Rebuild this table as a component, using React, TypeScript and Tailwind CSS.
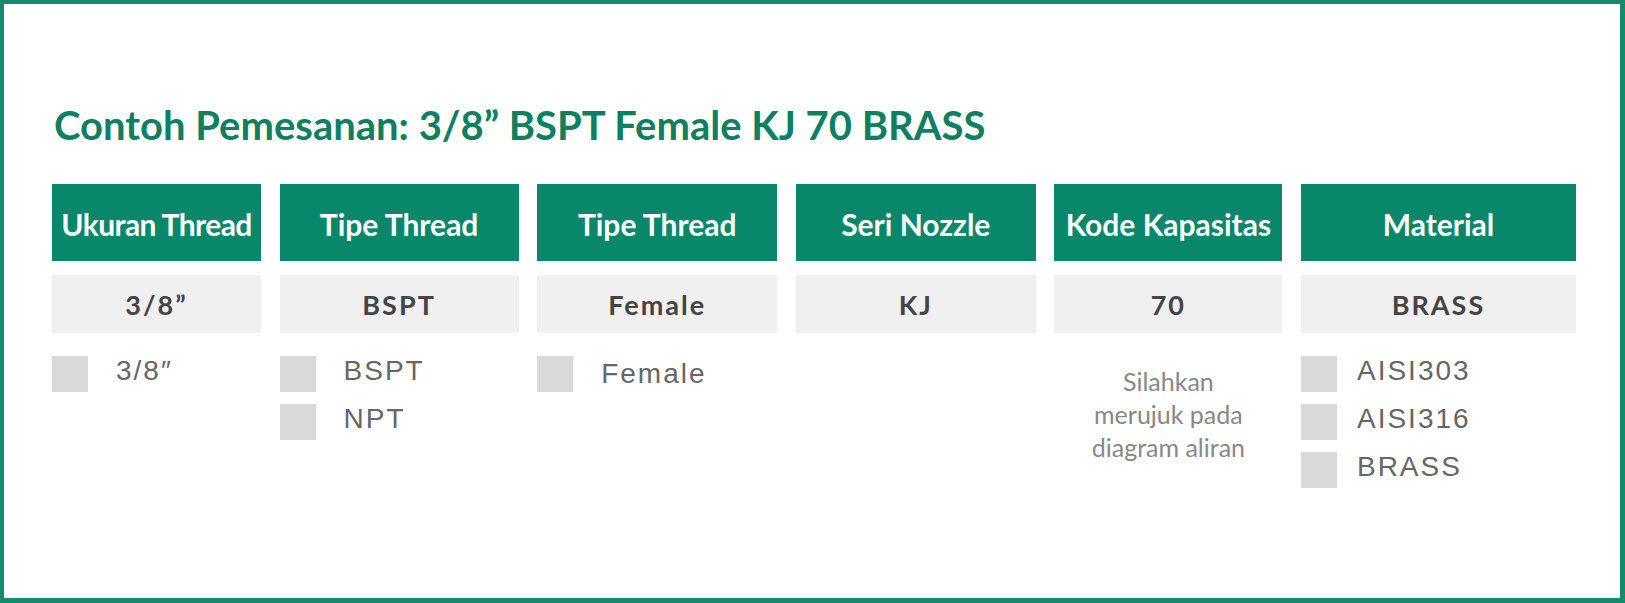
import React from 'react';

interface Column {
  title: string;
  value: string;
  width: string;
  options?: string[];
  note?: string[];
  optGap?: string;
  titleClass?: string;
}

const columns: Column[] = [
  {
    title: 'Ukuran Thread',
    value: '3/8”',
    width: 'w-[209px]',
    options: ['3/8″'],
    optGap: 'gap-[28px]',
    titleClass: 'tracking-[-0.6px]',
  },
  { title: 'Tipe Thread', value: 'BSPT', width: 'w-[239px]', options: ['BSPT', 'NPT'], optGap: 'gap-[28px]' },
  { title: 'Tipe Thread', value: 'Female', width: 'w-[240px]', options: ['Female'], optGap: 'gap-[28px]' },
  { title: 'Seri Nozzle', value: 'KJ', width: 'w-[240px]' },
  {
    title: 'Kode Kapasitas',
    value: '70',
    width: 'w-[228px]',
    note: ['Silahkan', 'merujuk pada', 'diagram aliran'],
  },
  { title: 'Material', value: 'BRASS', width: 'w-[275px]', options: ['AISI303', 'AISI316', 'BRASS'], optGap: 'gap-[20px]' },
];

const Option = ({ label, gap }: { label: string; gap?: string }) => (
  <div className={`flex items-start ${gap ?? 'gap-[28px]'}`}>
    <div className="w-[36px] h-[36px] shrink-0 bg-[#d9d9d9]" />
    <span
      className={`text-[28px] leading-[30px] tracking-[2px] text-[#666] ${label === 'Female' ? 'mt-[3px]' : ''}`}
      style={{ fontFamily: '"Liberation Sans", Arial, sans-serif' }}
    >
      {label}
    </span>
  </div>
);

export default function App() {
  return (
    <div
      className="w-[1625px] h-[603px] bg-white border-t-4 border-l-4 border-r-[5px] border-b-[5px] border-[#168a6c] pl-[48px] pt-[101px]"
      style={{ fontFamily: 'Lato, "Noto Sans", sans-serif' }}
    >
      <h1 className="text-[40px] leading-[40px] font-bold text-[#0f7f62] pl-[2px]">
        Contoh Pemesanan: 3/8” BSPT Female KJ 70 BRASS
      </h1>

      <div className="flex gap-x-[18.6px] mt-[39px]">
        {columns.map((col, i) => (
          <div key={i} className={`${col.width} flex flex-col`}>
            <div className="h-[77px] bg-[#08876a] flex items-center justify-center pt-[3px]">
              <span className={`text-white text-[30px] font-bold ${col.titleClass ?? ''}`}>{col.title}</span>
            </div>
            <div className="h-[58px] mt-[14px] bg-[#f0f0f0] flex items-center justify-center pt-[3px]">
              <span className="text-[#444] text-[27px] font-bold tracking-[2px]">{col.value}</span>
            </div>
            {col.options && (
              <div className="flex flex-col gap-[12px] mt-[23px]">
                {col.options.map((o) => (
                  <Option key={o} label={o} gap={col.optGap} />
                ))}
              </div>
            )}
            {col.note && (
              <div className="mt-[32px] text-center text-[25px] leading-[33px] text-[#888]">
                {col.note.map((n) => (
                  <div key={n}>{n}</div>
                ))}
              </div>
            )}
          </div>
        ))}
      </div>
    </div>
  );
}
